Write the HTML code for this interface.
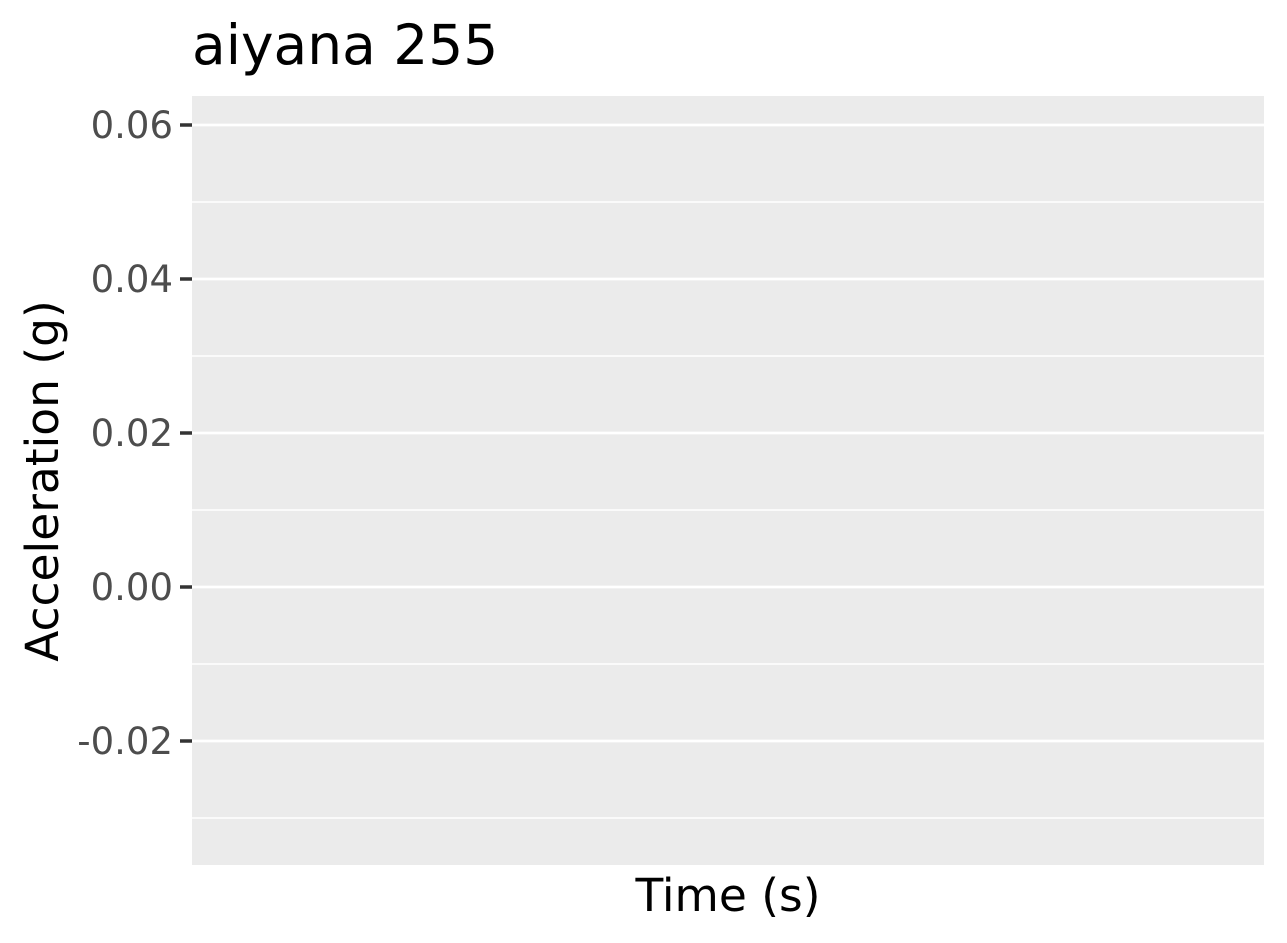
<!DOCTYPE html>
<html><head><style>html,body{margin:0;padding:0;background:#fff;}svg{display:block}text{font-family:"DejaVu Sans","Liberation Sans",sans-serif}</style></head>
<body>
<svg width="1287" height="943" viewBox="0 0 1287 943" xmlns="http://www.w3.org/2000/svg">
<rect width="1287" height="943" fill="#fff"/>
<rect x="192" y="96" width="1072" height="769" fill="#ebebeb"/>
<g stroke="#fff" stroke-width="1.4">
<line x1="192" x2="1264" y1="202" y2="202"/>
<line x1="192" x2="1264" y1="356" y2="356"/>
<line x1="192" x2="1264" y1="510" y2="510"/>
<line x1="192" x2="1264" y1="664" y2="664"/>
<line x1="192" x2="1264" y1="818" y2="818"/>
</g>
<g stroke="#fff" stroke-width="2.8">
<line x1="192" x2="1264" y1="125" y2="125"/>
<line x1="192" x2="1264" y1="279" y2="279"/>
<line x1="192" x2="1264" y1="433" y2="433"/>
<line x1="192" x2="1264" y1="587" y2="587"/>
<line x1="192" x2="1264" y1="741" y2="741"/>
</g>
<g stroke="#333" stroke-width="3.5">
<line x1="180" x2="192" y1="125" y2="125"/>
<line x1="180" x2="192" y1="279" y2="279"/>
<line x1="180" x2="192" y1="433" y2="433"/>
<line x1="180" x2="192" y1="587" y2="587"/>
<line x1="180" x2="192" y1="741" y2="741"/>
</g>
<g fill="#4d4d4d" style="font-size:37px" text-anchor="end">
<text x="173" y="138">0.06</text>
<text x="173" y="292">0.04</text>
<text x="173" y="446">0.02</text>
<text x="173" y="600">0.00</text>
<text x="173" y="754">-0.02</text>
</g>
<text x="728" y="911" style="font-size:45.5px" text-anchor="middle" fill="#000">Time (s)</text>
<text transform="translate(58,481) rotate(-90)" style="font-size:45.5px" text-anchor="middle" fill="#000">Acceleration (g)</text>
<text x="192" y="64" style="font-size:55px" fill="#000">aiyana 255</text>
</svg>
</body></html>
